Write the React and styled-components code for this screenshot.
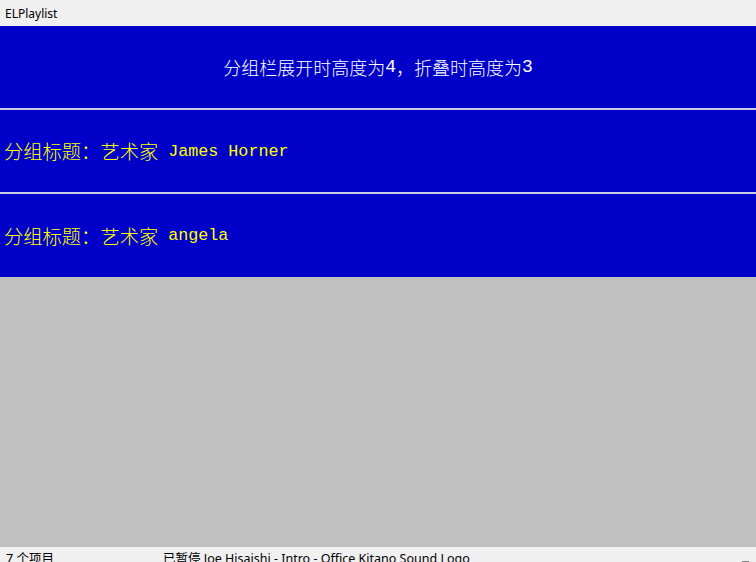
import React from "react";
import styled, { createGlobalStyle } from "styled-components";

const GlobalStyle = createGlobalStyle`
  html, body {
    margin: 0;
    padding: 0;
    background: #c0c0c0;
  }
`;

const Window = styled.div`
  display: flex;
  flex-direction: column;
  width: 756px;
  height: 562px;
  overflow: hidden;
  background: #c0c0c0;
`;

const TitleBar = styled.div`
  display: flex;
  align-items: center;
  height: 26px;
  flex-shrink: 0;
  padding-left: 5px;
  background: #f0f0f0;
  color: #000;
  font-family: "Noto Sans", "Open Sans", sans-serif;
  font-size: 12px;
`;

const GroupList = styled.div`
  display: flex;
  flex-direction: column;
  flex-shrink: 0;
`;

const Band = styled.div`
  display: flex;
  align-items: center;
  justify-content: ${(p) => (p.$center ? "center" : "flex-start")};
  height: ${(p) => (p.$last ? "83px" : "82px")};
  padding-left: ${(p) => (p.$center ? "0" : "4px")};
  background: #0000c8;
  border-bottom: ${(p) => (p.$last ? "none" : "2px solid #c8cce4")};
  color: ${(p) => p.$color};
  white-space: pre;
`;

const Cjk = styled.span`
  font-family: "Noto Sans CJK SC", sans-serif;
  font-weight: 300;
  font-size: ${(p) => p.$size}px;
`;

const Latin = styled.span`
  font-family: "Liberation Mono", monospace;
  font-size: ${(p) => p.$size}px;
`;

const Filler = styled.div`
  height: 270px;
  flex-shrink: 0;
  background: #c0c0c0;
`;

const StatusBar = styled.div`
  display: flex;
  height: 24px;
  flex-shrink: 0;
  background: #f0f0f0;
  color: #000;
  font-family: "Noto Sans", "Noto Sans CJK SC", sans-serif;
  font-size: 12.5px;
  padding-top: 1px;
`;

const Pane = styled.div`
  width: ${(p) => p.$width};
  padding-left: 6px;
  box-sizing: border-box;
  white-space: nowrap;
`;

const Grip = styled.div`
  margin-left: auto;
  margin-right: 7px;
  margin-top: 13px;
  width: 7px;
  height: 2px;
  background: #808080;
`;

const groups = ["James Horner", "angela"];

export default function App() {
  return (
    <>
      <GlobalStyle />
      <Window>
        <TitleBar>ELPlaylist</TitleBar>
        <GroupList>
          <Band $center $color="#ffffff">
            <Cjk $size={18}>分组栏展开时高度为</Cjk>
            <Latin $size={18}>4</Latin>
            <Cjk $size={18}>，折叠时高度为</Cjk>
            <Latin $size={18}>3</Latin>
          </Band>
          {groups.map((name, i) => (
            <Band key={name} $color="#ffff00" $last={i === groups.length - 1}>
              <Cjk $size={19.3}>分组标题：艺术家</Cjk>
              <Latin $size={16.7}> {name}</Latin>
            </Band>
          ))}
        </GroupList>
        <Filler />
        <StatusBar>
          <Pane $width="157px">7 个项目</Pane>
          <Pane $width="auto">已暂停 Joe Hisaishi - Intro - Office Kitano Sound Logo</Pane>
          <Grip />
        </StatusBar>
      </Window>
    </>
  );
}
